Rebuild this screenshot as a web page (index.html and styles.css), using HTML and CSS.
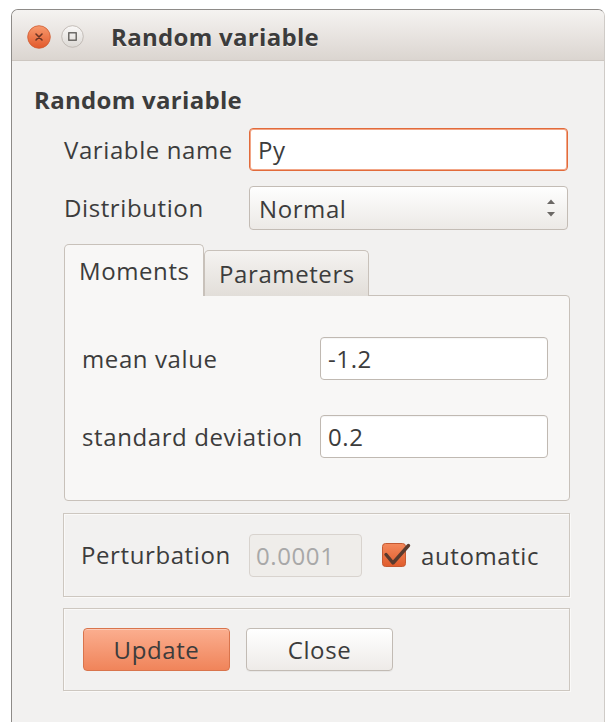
FILE: index.html
```html
<!DOCTYPE html>
<html lang="en">
<head>
<meta charset="utf-8">
<title>Random variable</title>
<link rel="stylesheet" href="styles.css">
</head>
<body>
<div class="window">
  <header class="titlebar">
    <span class="wbtn wbtn-close" aria-label="Close">
      <svg width="24" height="24" viewBox="0 0 24 24">
        <defs>
          <linearGradient id="closeGrad" x1="0" y1="0" x2="0" y2="1">
            <stop offset="0" stop-color="#f79a6e"/>
            <stop offset="1" stop-color="#e2592b"/>
          </linearGradient>
        </defs>
        <circle cx="12" cy="12" r="11.3" fill="url(#closeGrad)" stroke="#cf5a31" stroke-width="0.8"/>
        <path d="M9 9 L15 15 M15 9 L9 15" stroke="#6a3424" stroke-width="1.6" stroke-linecap="round"/>
      </svg>
    </span>
    <span class="wbtn wbtn-max" aria-label="Maximize">
      <svg width="23" height="23" viewBox="0 0 23 23">
        <defs>
          <linearGradient id="maxGrad" x1="0" y1="0" x2="0" y2="1">
            <stop offset="0" stop-color="#faf9f8"/>
            <stop offset="1" stop-color="#dcd8d4"/>
          </linearGradient>
        </defs>
        <circle cx="11.5" cy="11.5" r="10.8" fill="url(#maxGrad)" stroke="#bdb7b1" stroke-width="0.9"/>
        <rect x="7.8" y="7.8" width="7.4" height="7.4" fill="none" stroke="#5a5754" stroke-width="1.3"/>
      </svg>
    </span>
    <span class="title">Random variable</span>
  </header>

  <main class="content">
    <div class="group-title">Random variable</div>
    <div class="group">
      <div class="form">
        <label class="label">Variable name</label>
        <div class="input input-focus">Py</div>
        <label class="label">Distribution</label>
        <div class="combo">
          <span>Normal</span>
          <svg class="spin" width="10" height="22" viewBox="0 0 10 22">
            <path d="M1 7 L5 2.5 L9 7 Z" fill="#6b6865"/>
            <path d="M1 15 L5 19.5 L9 15 Z" fill="#6b6865"/>
          </svg>
        </div>
      </div>

      <div class="tabs">
        <div class="tabbar">
          <div class="tab tab-active tab-moments">Moments</div>
          <div class="tab tab-params">Parameters</div>
        </div>
        <div class="pane">
          <span class="label">mean value</span>
          <div class="input">-1.2</div>
          <span class="label">standard deviation</span>
          <div class="input">0.2</div>
        </div>
      </div>

      <div class="box box-perturb">
        <span class="label perturb-label">Perturbation</span>
        <div class="input input-disabled">0.0001</div>
        <span class="check">
          <svg width="29" height="25" viewBox="0 0 29 25">
            <defs>
              <linearGradient id="checkGrad" x1="0" y1="0" x2="0" y2="1">
                <stop offset="0" stop-color="#f4895c"/>
                <stop offset="1" stop-color="#e05c2c"/>
              </linearGradient>
            </defs>
            <rect x="0.5" y="0.5" width="23" height="23" rx="3" fill="url(#checkGrad)" stroke="#c45a33"/>
            <path d="M4 11.5 L11 20 L26.5 2.5" fill="none" stroke="#5a3b2e" stroke-width="3.4" stroke-linecap="round" stroke-linejoin="round"/>
          </svg>
        </span>
        <span class="check-label">automatic</span>
      </div>

      <div class="box box-actions">
        <button class="btn btn-primary">Update</button>
        <button class="btn">Close</button>
      </div>
    </div>
  </main>
</div>
</body>
</html>
```

FILE: styles.css
```css
* {
  box-sizing: border-box;
}

body {
  margin: 0;
  height: 722px;
  overflow: hidden;
  background: #ffffff;
  font-family: "Open Sans", "Noto Sans", sans-serif;
  font-size: 24px;
  letter-spacing: 0.6px;
  color: #3c3c3c;
}

/* window frame */
.window {
  margin: 9px 0 0 11px;
  height: 713px;
  background: #f2f1f0;
  border: 1px solid #8e8b88;
  border-bottom: 0;
  border-right-color: #cfcbc7;
  border-radius: 7px 7px 0 0;
  overflow: hidden;
}

.titlebar {
  height: 51px;
  display: flex;
  align-items: center;
  padding: 3px 0 0 15px;
  background: linear-gradient(#f5f3f1, #dbd5d0);
  border-bottom: 1px solid #cdc7c1;
}

.wbtn {
  display: flex;
}

.wbtn svg {
  display: block;
}

.wbtn-max {
  margin-left: 10px;
}

.title {
  margin-left: 27px;
  font-weight: 700;
  letter-spacing: 0.3px;
  color: #3c3c3c;
  text-shadow: 0 1px 0 rgba(255, 255, 255, 0.6);
}

/* dialog body */
.content {
  padding: 26px 0 0 22px;
}

.group-title {
  font-weight: 700;
  letter-spacing: 0.3px;
  line-height: 26px;
}

.group {
  margin-left: 29px;
  width: 507px;
}

.label {
  line-height: 30px;
  white-space: nowrap;
}

.form {
  display: grid;
  grid-template-columns: 185px 319px;
  grid-template-rows: 43px 44px;
  row-gap: 15px;
  align-items: center;
  margin: 15px 0 0 1px;
}

.input {
  height: 43px;
  display: flex;
  align-items: center;
  padding-left: 7px;
  background: #ffffff;
  border: 1px solid #c0b9b2;
  border-radius: 4px;
  box-shadow: inset 0 1px 1px rgba(0, 0, 0, 0.04);
}

.input-focus {
  border-color: #e26b3b;
  box-shadow: inset 0 0 0 1px #f2a687;
  padding-left: 8px;
}

.combo {
  height: 44px;
  display: flex;
  align-items: center;
  justify-content: space-between;
  padding: 0 11px 0 9px;
  background: linear-gradient(#fefefe, #ece9e6);
  border: 1px solid #c3bcb5;
  border-radius: 4px;
}

.spin {
  display: block;
}

/* tab widget */
.tabs {
  margin: 14px 0 0 1px;
  width: 506px;
}

.tabbar {
  display: flex;
  align-items: flex-end;
  height: 52px;
}

.tab {
  height: 46px;
  display: flex;
  align-items: center;
  padding-left: 14px;
  background: linear-gradient(#f5f3f1, #e2ded9);
  border: 1px solid #c8c1ba;
  border-bottom: 0;
  border-radius: 5px 5px 0 0;
}

.tab-moments {
  width: 140px;
}

.tab-params {
  width: 165px;
}

.tab-active {
  height: 52px;
  position: relative;
  z-index: 1;
  background: #f8f7f6;
}

.pane {
  margin-top: -1px;
  height: 206px;
  display: grid;
  grid-template-columns: 238px 228px;
  row-gap: 35px;
  align-content: start;
  align-items: center;
  padding: 41px 21px 0 17px;
  background: #f8f7f6;
  border: 1px solid #c8c1ba;
  border-radius: 0 4px 4px 4px;
}

/* framed sections */
.box {
  display: flex;
  align-items: center;
  border: 1px solid #cdc7c0;
  box-shadow: inset 1px 1px 0 #faf9f8, 1px 1px 0 #faf9f8;
}

.box-perturb {
  margin-top: 12px;
  height: 84px;
  padding-left: 17px;
}

.perturb-label {
  width: 168px;
}

.input-disabled {
  width: 113px;
  padding-left: 6px;
  background: #efedea;
  border-color: #d8d3ce;
  color: #a8a8a8;
  box-shadow: none;
}

.check {
  display: flex;
  margin-left: 20px;
}

.check svg {
  display: block;
}

.check-label {
  margin-left: 10px;
}

.box-actions {
  margin-top: 11px;
  height: 83px;
  padding-left: 19px;
  gap: 16px;
}

.btn {
  width: 147px;
  height: 43px;
  padding: 0;
  font: inherit;
  letter-spacing: inherit;
  color: #3c3c3c;
  background: linear-gradient(#ffffff, #eeebe8);
  border: 1px solid #c2bbb4;
  border-radius: 4px;
  box-shadow: 0 1px 0 rgba(0, 0, 0, 0.04);
}

.btn-primary {
  background: linear-gradient(#fbae8f, #f0845a);
  border-color: #d9744c;
  box-shadow: inset 0 1px 0 rgba(255, 255, 255, 0.35);
}
```
